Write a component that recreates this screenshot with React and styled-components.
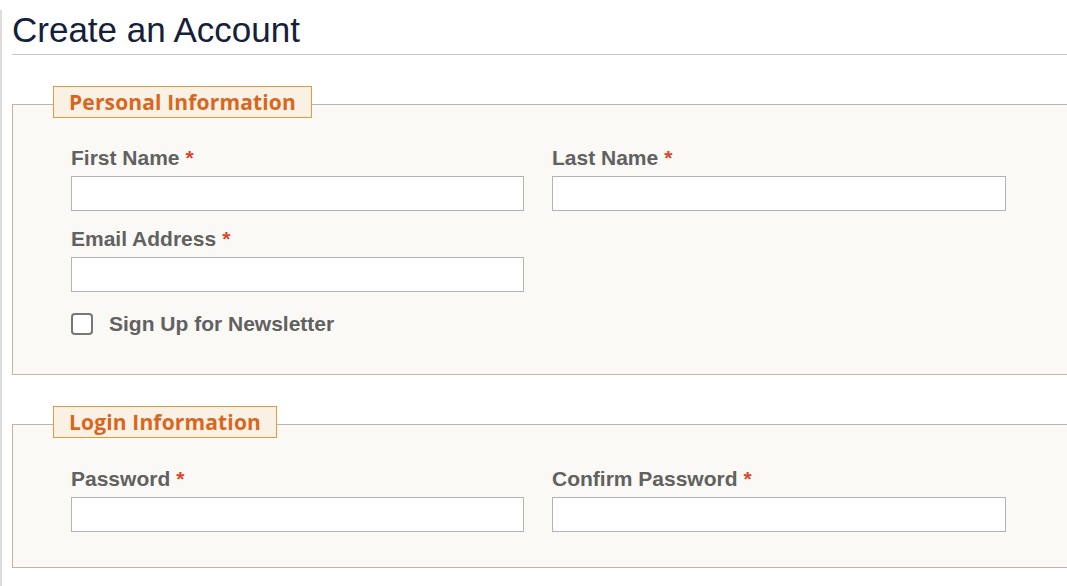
import React from 'react';
import styled, { createGlobalStyle } from 'styled-components';

const GlobalStyle = createGlobalStyle`
  html, body {
    margin: 0;
    padding: 0;
    background: #ffffff;
    overflow: hidden;
  }
`;

const Page = styled.div`
  width: 1120px;
  min-height: 586px;
  box-sizing: border-box;
  border-left: 2px solid #dcdcdc;
  padding-left: 10px;
  font-family: "Liberation Sans", Arial, sans-serif;
`;

const Title = styled.h1`
  margin: 10px 0 0;
  padding-bottom: 4px;
  font-size: 35px;
  line-height: 40px;
  font-weight: 400;
  color: #152039;
  border-bottom: 1px solid #cccccc;
`;

const Fieldset = styled.fieldset`
  margin: 31px 0 0;
  padding: 0 0 ${p => p.$bottom}px 40px;
  border: 1px solid #c2b4a6;
  background: #faf9f5;
  min-width: 0;
`;

const Legend = styled.legend`
  box-sizing: border-box;
  height: 36px;
  padding: 0;
`;

const LegendBox = styled.span`
  display: block;
  box-sizing: border-box;
  height: 32px;
  padding: 0 15px;
  line-height: 30px;
  border: 1px solid #e49a3c;
  background: #f9f1e4;
  color: #d9661f;
  font-family: "Open Sans", "Noto Sans", sans-serif;
  font-weight: 700;
  font-size: 21px;
  letter-spacing: 0.15px;
`;

const Body = styled.div`
  padding: ${p => p.$top}px 0 0 18px;
`;

const Grid = styled.div`
  display: grid;
  grid-template-columns: 453px 454px;
  column-gap: 28px;
  row-gap: 16px;
`;

const Field = styled.div`
  display: flex;
  flex-direction: column;
`;

const Label = styled.label`
  font-size: 21px;
  line-height: 24px;
  font-weight: 700;
  color: #616161;
  margin-bottom: 6px;
`;

const Star = styled.span`
  color: #d5482a;
  margin-left: 6px;
`;

const Input = styled.input`
  box-sizing: border-box;
  height: 35px;
  width: 100%;
  margin: 0;
  border: 1px solid #b3b3b3;
  border-radius: 0;
  background: #ffffff;
  font-size: 18px;
  padding: 0 8px;
  outline: none;
`;

const CheckRow = styled.label`
  display: flex;
  align-items: center;
  gap: 16px;
  margin-top: 20px;
  font-size: 21px;
  line-height: 24px;
  font-weight: 700;
  color: #616161;
`;

const Check = styled.input`
  appearance: none;
  box-sizing: border-box;
  width: 22px;
  height: 22px;
  margin: 0;
  border: 2px solid #767676;
  border-radius: 4px;
  background: #ffffff;
`;

function TextField({ label, type = 'text' }) {
  return (
    <Field>
      <Label>
        {label}
        <Star>*</Star>
      </Label>
      <Input type={type} />
    </Field>
  );
}

function Section({ title, top, bottom, children }) {
  return (
    <Fieldset $bottom={bottom}>
      <Legend>
        <LegendBox>{title}</LegendBox>
      </Legend>
      <Body $top={top}>{children}</Body>
    </Fieldset>
  );
}

export default function App() {
  return (
    <>
      <GlobalStyle />
      <Page>
        <Title>Create an Account</Title>

        <Section title="Personal Information" top={24} bottom={38}>
          <Grid>
            <TextField label="First Name" />
            <TextField label="Last Name" />
            <TextField label="Email Address" type="email" />
          </Grid>
          <CheckRow>
            <Check type="checkbox" />
            Sign Up for Newsletter
          </CheckRow>
        </Section>

        <Section title="Login Information" top={25} bottom={35}>
          <Grid>
            <TextField label="Password" type="password" />
            <TextField label="Confirm Password" type="password" />
          </Grid>
        </Section>
      </Page>
    </>
  );
}
